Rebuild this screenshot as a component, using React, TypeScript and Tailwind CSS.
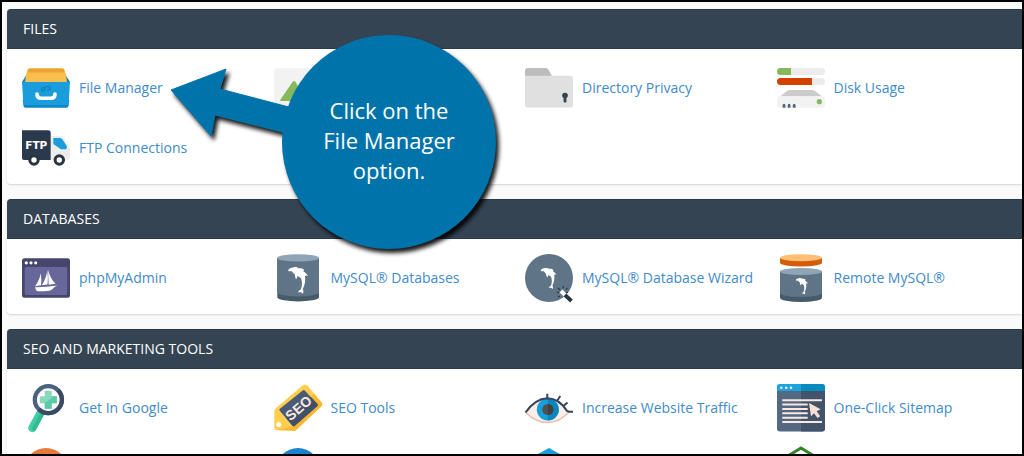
import type { ReactNode } from "react";

function Icon({ children }: { children: ReactNode }) {
  return (
    <svg viewBox="0 0 48 48" className="size-12 shrink-0 overflow-visible" aria-hidden="true">
      {children}
    </svg>
  );
}

function Dolphin({ transform }: { transform: string }) {
  return (
    <path
      transform={transform}
      fill="#fff"
      d="M0 11C2 5 7 2 13 2C18 0 26-1 32 4C38 3 45 5 48 8L46 13C52 17 58 22 60 27C57 25 54 25 51 27C53 40 51 54 44 67C47 70 47 75 45 80C41 76 37 75 30 76C31 73 34 70 39 67C43 55 43 44 39 34C36 31 32 29 28 27C28 30 27 34 24 37C22 33 21 28 20 22C16 19 13 14 10 12C6 14 3 13 0 11Z"
    />
  );
}

const fileManager = (
  <Icon>
    <path d="M7.500 4.300H40.500Q42 4.300 42.500 6L43.500 12H4.500L5.500 6Q6 4.300 7.500 4.300Z" fill="#eda32c" />
    <path d="M0 18L4 11.500V18ZM48 18L44 11.500V18Z" fill="#0c82be" />
    <path d="M5.500 8.500H42.500Q44 8.500 44.200 10L45 19H3L4 10Q4.200 8.500 5.500 8.500Z" fill="#f8be50" />
    <path d="M.7 36L1.500 42Q1.800 43.800 3.500 43.800H44.500Q46.200 43.800 46.500 42L47.300 36Z" fill="#0c86c6" />
    <path d="M0 18H48L46.700 39.500Q46.500 41 45 41H3Q1.500 41 1.300 39.500Z" fill="#1b9ddd" />
    <path d="M15 30Q15 34.200 19 34.200H29Q33 34.200 33 30" fill="none" stroke="#fff" strokeWidth="3.600" strokeLinecap="round" />
    <path d="M22.300 23.600H21.500A1.700 1.700 0 0 0 21 27H22L23.700 22.500H26.500A1.700 1.700 0 0 1 26.500 26H25" fill="none" stroke="#0c7cba" strokeWidth="1.200" />
  </Icon>
);

const ftp = (
  <Icon>
    <path d="M0 6.300H26Q28.700 6.300 28.700 9V36H2Q0 36 0 34Z" fill="#2a394b" />
    <path d="M29.300 12H38Q40.500 12 41.800 14L47 22.500Q48 24 48 26V33Q48 36 45 36H29.300Z" fill="#ececec" />
    <path d="M31.300 14H38Q39.500 14 40.500 15.500L44.700 22V24Q44.700 25.200 43.500 25.200H39L31.300 20Z" fill="#1b9ddd" />
    <circle cx="12" cy="36" r="4.200" fill="#fff" stroke="#28343f" strokeWidth="3" />
    <circle cx="37.300" cy="36" r="4.200" fill="#fff" stroke="#28343f" strokeWidth="3" />
    <text x="14.300" y="25" textAnchor="middle" fill="#fff" fontSize="10.500" fontWeight="700" fontFamily="DejaVu Sans, sans-serif">FTP</text>
  </Icon>
);

const images = (
  <Icon>
    <rect y="4.300" width="48" height="39.500" rx="2.500" fill="#f2f2f2" />
    <path d="M7 37H41Q42.500 37 41.500 35.500L34 25Q33 24 32 25L28 29L21.500 18Q20 16 18.500 18L6.500 35.500Q5.500 37 7 37Z" fill="#86b95b" />
  </Icon>
);

const privacy = (
  <Icon>
    <path d="M0 14V7Q0 4 3 4H20.500Q22.500 4 23.700 6L27.500 13Z" fill="#bcbcbc" />
    <path d="M0 11.700H45Q48 11.700 48 14.700V40.500Q48 43.500 45 43.500H3Q0 43.500 0 40.500Z" fill="#e0e0e0" />
    <circle cx="40" cy="31.500" r="2.800" fill="#35424f" />
    <path d="M38.600 32H41.400V38.400H38.600Z" fill="#35424f" />
  </Icon>
);

const disk = (
  <Icon>
    <rect y="4" width="48" height="7" rx="3.500" fill="#ececec" />
    <path d="M14 4H3.500A3.500 3.500 0 0 0 3.500 11H14Z" fill="#86b95b" />
    <rect y="14" width="48" height="7" rx="3.500" fill="#ececec" />
    <path d="M35 14H3.500A3.500 3.500 0 0 0 3.500 21H35Z" fill="#d24100" />
    <path d="M3 32.500L10 27Q11.500 26 13 26H35Q36.500 26 38 27L45 32.500Z" fill="#cbcbcb" />
    <path d="M0 36Q0 32.300 3 32.300H45Q48 32.300 48 36V41Q48 43.800 45 43.800H3Q0 43.800 0 41Z" fill="#f2f2f2" />
    <circle cx="42.300" cy="37.700" r="2.600" fill="#86b95b" />
    <path d="M5.600 43.700V41.500A1.400 1.700 0 0 1 8.400 41.500V43.700ZM10.700 43.700V41.500A1.400 1.700 0 0 1 13.500 41.500V43.700ZM15.800 43.700V41.500A1.400 1.700 0 0 1 18.600 41.500V43.700Z" fill="#51657a" />
  </Icon>
);

const phpMyAdmin = (
  <Icon>
    <rect y="4.300" width="48" height="39.400" rx="2.500" fill="#47456c" />
    <rect x="2.700" y="13" width="42.600" height="28" rx="2" fill="#686799" />
    <g fill="#fff">
      <circle cx="4.300" cy="8.800" r="1.600" />
      <circle cx="9" cy="8.800" r="1.600" />
      <circle cx="13.700" cy="8.800" r="1.600" />
      <path d="M18.700 19.300Q19.800 26 19 31.200L13 32.300Q17.500 26.500 18.700 19.300Z" />
      <path d="M25.300 16Q26.300 24 25.500 30.500L19.700 31.300Q24.500 24 25.300 16Z" />
      <path d="M26 16Q28.500 25 33.500 29.800L26.700 30.800Z" />
      <path d="M13 33.200Q24 33.300 35.700 31.500Q31.500 33 30.800 35Q28 37.200 22 37.200H15.500Q13.500 36 13 33.200Z" />
    </g>
  </Icon>
);

const mysql = (
  <Icon>
    <path d="M3.300 4V43.500A20.900 4.300 0 0 0 45 43.500V4Z" fill="#465b69" />
    <path d="M3.300 4V38.500A20.900 4.300 0 0 0 45 38.500V4Z" fill="#5f7486" />
    <ellipse cx="24.150" cy="3.900" rx="20.850" ry="3.600" fill="#8fa5b5" />
    <Dolphin transform="translate(14 13) scale(.333)" />
  </Icon>
);

const wizard = (
  <Icon>
    <circle cx="24" cy="24" r="24" fill="#5f7486" />
    <Dolphin transform="translate(15.700 13.800) scale(.265)" />
    <path d="M36 37L40 41" stroke="#fff" strokeWidth="4" />
    <path d="M40 41L46.500 47" stroke="#28343f" strokeWidth="3.800" />
    <path d="M33 34L35 36M38.200 32V34.300M42.500 34L41 35.700M31.800 38.400H34M34.800 42L33 43.300M41 38.500H43" stroke="#28343f" strokeWidth="1.100" />
  </Icon>
);

const remote = (
  <Icon>
    <path d="M3 3.900V8.800A21 3.800 0 0 0 45 8.800V3.900Z" fill="#d35c0b" />
    <ellipse cx="24" cy="3.700" rx="21" ry="3.500" fill="#ffbe74" />
    <path d="M3 17.500V43.700A21 4.300 0 0 0 45 43.700V17.500Z" fill="#465b69" />
    <path d="M3 17.500V38.800A21 4.300 0 0 0 45 38.800V17.500Z" fill="#5f7486" />
    <ellipse cx="24" cy="17.500" rx="21" ry="3.600" fill="#8fa5b5" />
    <Dolphin transform="translate(18.700 24) scale(.205)" />
  </Icon>
);

const google = (
  <Icon>
    <path d="M18.500 29L10.300 44" stroke="#43cda5" strokeWidth="8" strokeLinecap="round" />
    <path d="M20 30L11.500 46" stroke="#2fba92" strokeWidth="4" />
    <circle cx="26.300" cy="15.700" r="13.500" fill="#faf8f7" stroke="#4b617d" strokeWidth="4.200" />
    <path d="M36 6A13.500 13.500 0 0 1 17 25.200" fill="none" stroke="#3b4a63" strokeWidth="4.200" />
    <path d="M22.800 7.500Q22.800 6.800 23.500 6.800H29Q29.700 6.800 29.700 7.500V12.300H34Q34.800 12.300 34.800 13V18.400Q34.800 19.200 34 19.200H29.700V23.900Q29.700 24.700 29 24.700H23.500Q22.800 24.700 22.800 23.900V19.200H18.700Q17.900 19.200 17.900 18.400V13Q17.900 12.300 18.700 12.300H22.800Z" fill="#84d9bf" />
    <path d="M34.800 12.300V18.400Q34.800 19.200 34 19.200H29.700V24.700H22.800V19.200L29.700 14V12.300Z" fill="#5cc9a9" />
  </Icon>
);

const seo = (
  <Icon>
    <path d="M.3 27Q.3 25.500 1.500 24.500L28.500 1.500Q31 0 33.500 1.500L47.500 18.500Q49 20.500 47.500 22.300L21.300 46.700L2 46Q.3 45.500 .3 43.500Z" fill="#ffce4f" />
    <path d="M40 9.500L47.500 18.500Q49 20.500 47.500 22.300L21.300 46.700L2 46L19 43Z" fill="#fdb72f" />
    <path d="M5.700 26.800Q4.800 25.800 5.900 24.800L28.700 6.500Q30 5.500 31 6.700L43.400 20Q44.300 21.200 43.200 22.200L20.500 42Q19.500 42.800 18.500 41.700Z" fill="#4a5b75" />
    <path d="M37 13L43.400 20Q44.300 21.200 43.200 22.200L20.500 42Q19.500 42.800 18.500 41.700L12 34Z" fill="#40506a" />
    <circle cx="4.800" cy="40.500" r="2.500" fill="#fff" />
    <text x="0" y="5" transform="translate(24.500 24) rotate(-41)" textAnchor="middle" fill="#fbe8df" fontSize="14" fontWeight="700" fontFamily="Liberation Sans, sans-serif">SEO</text>
  </Icon>
);

const traffic = (
  <Icon>
    <path d="M1 28.700Q10 15 22.500 14.500Q35 14.500 43.500 28.500Q34 38.500 23 38.500Q11 38.500 1 28.700Z" fill="#fcefe9" stroke="#e7c0ae" strokeWidth="1.500" />
    <circle cx="22.800" cy="25.500" r="11" fill="#169fdb" />
    <path d="M22.800 14.500A11 11 0 0 1 22.800 36.500Z" fill="#0b86ba" />
    <circle cx="22.800" cy="25.500" r="5.600" fill="#505152" />
    <path d="M22.800 19.900A5.600 5.600 0 0 1 22.800 31.100Z" fill="#404142" />
    <path d="M.5 28.500Q10 14.800 22.500 14.300C31 14.500 37 19 42 27L44 27.800H48M22.300 14V9.800M31.800 17.300L35.300 12M38.200 22.300L42.500 18.600" fill="none" stroke="#344561" strokeWidth="2" />
  </Icon>
);

const sitemap = (
  <Icon>
    <path d="M0 5H48V44.500Q48 47.500 45 47.500H3Q0 47.500 0 44.500Z" fill="#536982" />
    <path d="M24 5H48V44.500Q48 47.500 45 47.500H24Z" fill="#42536b" />
    <path d="M0 7V2.500Q0 0 2.500 0H24V7Z" fill="#1aa3dc" />
    <path d="M24 0H45.500Q48 0 48 2.500V7H24Z" fill="#078bbd" />
    <g fill="#fcefe9">
      <circle cx="4.300" cy="3.700" r="1.300" />
      <circle cx="9.200" cy="3.700" r="1.300" />
      <circle cx="14" cy="3.700" r="1.300" />
    </g>
    <path d="M5.300 16.300H45M5.300 20.600H30.700M5.300 25H30.700M5.300 29.300H30.700M5.300 33.700H30.700M5.300 38H45" stroke="#f8e8df" strokeWidth="2" />
    <path d="M32 19L43.700 25.300L39.700 27.300L43.200 32.200L40.500 34L37 29.200L34 32.300Z" fill="#f7dfd3" />
  </Icon>
);

const orangeDisc = (
  <Icon>
    <circle cx="24" cy="26" r="22" fill="#e57a3c" />
  </Icon>
);
const blueDisc = (
  <Icon>
    <circle cx="24" cy="26" r="22" fill="#1b82d1" />
  </Icon>
);
const cyanHexagon = (
  <Icon>
    <path d="M24 4L44 15V37L24 48L4 37V15Z" fill="#1b9ddd" />
  </Icon>
);
const greenHexagon = (
  <Icon>
    <path d="M24 4L42 15V37L24 47L6 37V15Z" fill="#fff" stroke="#37832c" strokeWidth="3" />
  </Icon>
);

type Tool = { icon: ReactNode; name: string; iconOnly?: boolean };

const groups: { title: string; tools: Tool[] }[] = [
  {
    title: "FILES",
    tools: [
      { icon: fileManager, name: "File Manager" },
      { icon: images, name: "Images", iconOnly: true },
      { icon: privacy, name: "Directory Privacy" },
      { icon: disk, name: "Disk Usage" },
      { icon: ftp, name: "FTP Connections" },
    ],
  },
  {
    title: "DATABASES",
    tools: [
      { icon: phpMyAdmin, name: "phpMyAdmin" },
      { icon: mysql, name: "MySQL® Databases" },
      { icon: wizard, name: "MySQL® Database Wizard" },
      { icon: remote, name: "Remote MySQL®" },
    ],
  },
  {
    title: "SEO AND MARKETING TOOLS",
    tools: [
      { icon: google, name: "Get In Google" },
      { icon: seo, name: "SEO Tools" },
      { icon: traffic, name: "Increase Website Traffic" },
      { icon: sitemap, name: "One-Click Sitemap" },
      { icon: orangeDisc, name: "Promotion", iconOnly: true },
      { icon: blueDisc, name: "Advertising", iconOnly: true },
      { icon: cyanHexagon, name: "Analytics", iconOnly: true },
      { icon: greenHexagon, name: "Hosting", iconOnly: true },
    ],
  },
];

function Panel({ title, tools }: { title: string; tools: Tool[] }) {
  return (
    <section className="rounded-l bg-white shadow-[0_1px_2px_rgba(0,0,0,0.15)]">
      <h2 className="flex h-10 items-center rounded-tl border-y border-[#293a4a] bg-[#354453] px-4 text-sm text-white">
        {title}
      </h2>
      <ul className="-mr-[6px] grid grid-cols-4 gap-y-3 pt-[15px] pb-3 pl-[15px]">
        {tools.map((tool) => (
          <li key={tool.name}>
            <a
              href="#"
              aria-label={tool.iconOnly ? tool.name : undefined}
              className="flex items-center gap-[9px] text-sm whitespace-nowrap text-[#428bca]"
            >
              {tool.icon}
              {!tool.iconOnly && <span>{tool.name}</span>}
            </a>
          </li>
        ))}
      </ul>
    </section>
  );
}

function Callout() {
  return (
    <aside className="pointer-events-none absolute top-[23px] left-[158px] h-[235px] w-[345px]">
      <svg viewBox="0 0 345 235" className="absolute inset-0 overflow-visible drop-shadow-[3px_4px_2px_rgba(0,0,0,0.9)]" aria-hidden="true">
        <path
          d="M11 65L66 44L60 64L140 85L134 110L55 90L51 111Z"
          fill="#0073aa"
          stroke="#0073aa"
          strokeLinejoin="round"
        />
        <circle cx="229" cy="117" r="107" fill="#0073aa" />
      </svg>
      <p className="relative ml-[122px] flex h-full w-[214px] flex-col items-center justify-center pb-[6px] text-center text-[22px] leading-[30px] text-white">
        <span>Click on the</span>
        <span>File Manager</span>
        <span>option.</span>
      </p>
    </aside>
  );
}

export default function App() {
  return (
    <main className="relative h-screen overflow-hidden border-2 border-black bg-[#fafafa] font-['Open_Sans','Noto_Sans',sans-serif]">
      <div className="flex flex-col gap-[15px] pt-[7px] pl-[5px]">
        {groups.map((group) => (
          <Panel key={group.title} title={group.title} tools={group.tools} />
        ))}
      </div>
      <Callout />
    </main>
  );
}
